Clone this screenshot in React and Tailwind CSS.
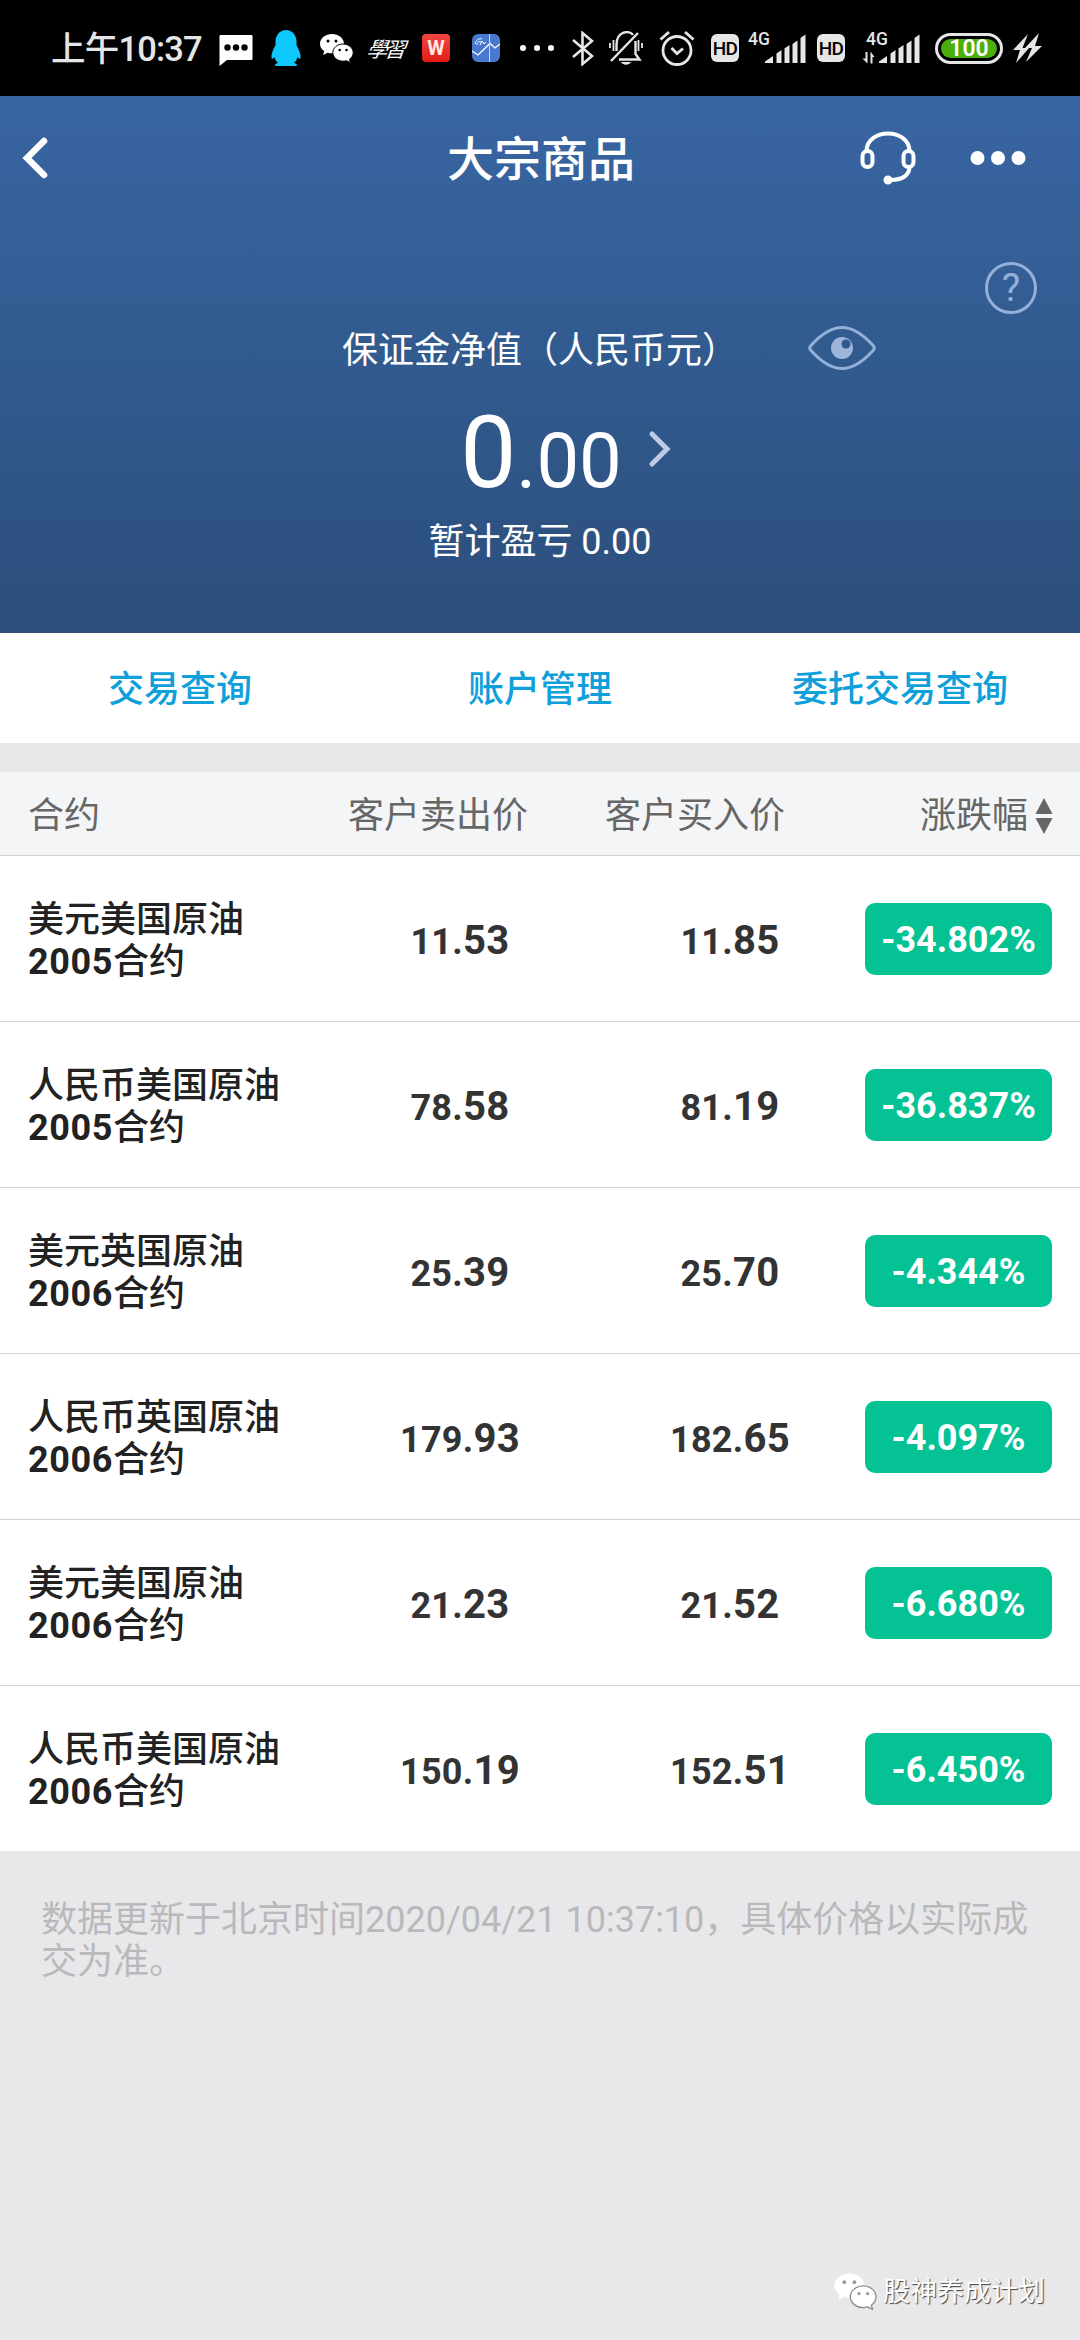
const contracts = [
  { name: "美元美国原油", year: "2005", sell: "11.53", buy: "11.85", change: "-34.802%" },
  { name: "人民币美国原油", year: "2005", sell: "78.58", buy: "81.19", change: "-36.837%" },
  { name: "美元英国原油", year: "2006", sell: "25.39", buy: "25.70", change: "-4.344%" },
  { name: "人民币英国原油", year: "2006", sell: "179.93", buy: "182.65", change: "-4.097%" },
  { name: "美元美国原油", year: "2006", sell: "21.23", buy: "21.52", change: "-6.680%" },
  { name: "人民币美国原油", year: "2006", sell: "150.19", buy: "152.51", change: "-6.450%" },
];

const tabs = ["交易查询", "账户管理", "委托交易查询"];

const WechatIcon = ({ className, eye = "#000", stroke = "#000" }) => (
  <svg viewBox="0 0 35 30" className={className}>
    <path
      d="M13 1C6.400 1 1 5.300 1 10.700c0 3 1.700 5.700 4.300 7.500L4 22l4.600-2.300c1.400.4 2.900.6 4.400.6 6.600 0 12-4.300 12-9.600S19.600 1 13 1z"
      fill="#fff"
    />
    <path
      d="M24 11c-5.600 0-10.200 3.800-10.200 8.600S18.400 28.200 24 28.200c1.300 0 2.500-.2 3.600-.5l3.900 2-1-3.400c2.300-1.600 3.700-4 3.700-6.700C34.200 14.800 29.600 11 24 11z"
      fill="#fff"
      stroke={stroke}
      strokeWidth="1"
    />
    <g fill={eye}>
      <circle cx="9" cy="8" r="1.500" />
      <circle cx="17" cy="8" r="1.500" />
      <circle cx="20.700" cy="17" r="1.300" />
      <circle cx="27.500" cy="17" r="1.300" />
    </g>
  </svg>
);

const Signal = ({ arrows }) => (
  <svg viewBox="0 0 58 32" className="h-8 w-[58px] overflow-visible" fill="#e6e6e6">
    <text x={arrows ? 4 : 0} y="12.500" fontSize="17.500" fontWeight="500" fontFamily="Roboto, sans-serif">
      4G
    </text>
    {arrows ? <path d="M3.500 20h2v11.500L.5 26.500h3zM8.500 31.500V19.500l4 5.500h-2v6.500z" /> : null}
    <path d="M17 31v-1.500l8-5.500V31zM28.500 21.500l5-3.500v13h-5zM36.500 16.500l5-3.500v18h-5zM44.500 12l5-3.500V31h-5zM52.500 6l5-3.500V31h-5z" />
  </svg>
);

const HdBadge = () => (
  <div className="flex h-7 w-7 items-center justify-center rounded-[6px] bg-[#e6e6e6] text-[19px] font-medium leading-none tracking-[-0.8px] text-black">
    HD
  </div>
);

const StatusBar = () => (
  <div className="flex h-24 items-center bg-black pl-[51px] text-[#e6e6e6]">
    <div className="w-[168px] whitespace-nowrap pt-[2px] text-[34.5px] font-medium leading-none tracking-[-0.8px]">上午10:37</div>
    <svg viewBox="0 0 34 32" className="mt-1 h-8 w-[34px]">
      <path d="M1.500 1h31q1 0 1 1v23q0 1-1 1H8l-7.500 6V2q0-1 1-1z" fill="#fff" />
      <circle cx="8.500" cy="13.500" r="3.200" />
      <circle cx="17" cy="13.500" r="3.200" />
      <circle cx="25.500" cy="13.500" r="3.200" />
    </svg>
    <svg viewBox="0 0 30 37" className="ml-[18px] h-[37px] w-[30px]" fill="#0fc8fb">
      <path d="M15 0C8.500 0 5 5 4.500 11v4C2 20 0 24 .5 28c.3 1.500 2 .5 3-1 .6 2.500 1.700 4.700 3.500 6-3 .5-4 3-2 3h20c2 0 1-2.500-2-3 1.800-1.300 2.900-3.500 3.500-6 1 1.500 2.700 2.500 3 1 .5-4-1.500-8-4-13v-4C25 5 21.500 0 15 0z" />
    </svg>
    <WechatIcon className="ml-[18px] h-[30px] w-[35px]" />
    <div className="ml-[13px] w-[38px] -skew-x-6 whitespace-nowrap font-['Noto_Sans_CJK_TC',sans-serif] text-[21px] italic leading-none tracking-[-3px] text-white">
      學習
    </div>
    <div className="ml-[17px] flex h-7 w-7 items-center justify-center rounded-[4px] bg-gradient-to-b from-[#f0453d] to-[#e11914] text-[20px] font-bold leading-none text-[#fde8e4]">
      W
    </div>
    <svg viewBox="0 0 28 28" className="ml-[22px] h-7 w-7">
      <rect width="28" height="28" rx="6" fill="#4878cf" />
      <path d="M0 17l6 4L18 9.500l5 4.500 5-4" fill="none" stroke="#fff" strokeWidth="1.300" />
      <path d="M17.500 0v28" stroke="#c9d8f2" strokeWidth="1" />
      <path d="M3 10c1-4 4-6 7-5M5 11c0-3 2-4 4-3M8 11l2-4 2 3 2-2" fill="none" stroke="#fff" strokeWidth="1" />
    </svg>
    <div className="ml-5 flex w-[34px] justify-between">
      <i className="h-[6px] w-[6px] rounded-full bg-white" />
      <i className="h-[6px] w-[6px] rounded-full bg-white" />
      <i className="h-[6px] w-[6px] rounded-full bg-white" />
    </div>
    <svg viewBox="0 0 22 35" className="ml-[18px] h-[35px] w-[22px]" fill="none" stroke="#e6e6e6" strokeWidth="2.600">
      <path d="M1 9l19 16-9.500 8V2L20 10 1 26" />
    </svg>
    <svg viewBox="0 0 34 34" className="ml-[15px] h-[34px] w-[34px]" fill="none" stroke="#e6e6e6" strokeWidth="2.400">
      <path d="M7.500 20v-6C7.500-.5 21-1 24 4M10 28.500h20.500L26.500 23V10M2 30L29 2" />
      <path d="M4.500 9v11M1 12v5M29.500 9v11M33 12v5" strokeWidth="1.800" />
      <path d="M12 31h10c-2 3.500-8 3.500-10 0z" fill="#e6e6e6" stroke="none" />
    </svg>
    <svg viewBox="0 0 36 36" className="ml-4 h-9 w-9" fill="none" stroke="#e6e6e6" strokeWidth="2.800">
      <circle cx="18" cy="20.500" r="14" />
      <path d="M12.500 18l5.500 5.500 6-5M1.500 9.500L10 2M34.500 9.500L26 2" />
    </svg>
    <div className="ml-4">
      <HdBadge />
    </div>
    <div className="ml-[9px]">
      <Signal />
    </div>
    <div className="ml-[11px]">
      <HdBadge />
    </div>
    <div className="ml-[17px]">
      <Signal arrows />
    </div>
    <div className="ml-[15px] flex h-[31px] w-[68px] rounded-full border-[3px] border-[#e6e6e6] p-[3px]">
      <div className="flex flex-1 items-center justify-center rounded-full bg-[#4bae0c] text-[23px] font-semibold leading-none text-white">
        100
      </div>
    </div>
    <svg viewBox="0 0 30 30" className="ml-[10px] h-[30px] w-[30px]" fill="#e6e6e6">
      <path d="M15 1L0 17h7L3 30 16 15H9.500zM26 0L12 15h7l-6 14 16-16h-7z" />
    </svg>
  </div>
);

const AccountPanel = () => (
  <section className="relative h-[537px] bg-gradient-to-b from-[#3866a3] via-[#315a8e] to-[#2c4f7c] text-white">
    <nav className="flex h-[124px] items-center">
      <svg viewBox="0 0 26 42" className="ml-[22px] h-[42px] w-[26px]" fill="none" stroke="#fff" strokeWidth="6.500">
        <path d="M22 4L5 21l17 17" strokeLinecap="round" />
      </svg>
      <h1 className="ml-[399px] w-[188px] whitespace-nowrap pt-[2px] text-[47px] font-medium leading-none">大宗商品</h1>
      <svg viewBox="0 0 56 56" className="ml-[225px] h-14 w-14" fill="none" stroke="#fff" strokeWidth="4">
        <rect x="2.500" y="21" width="10" height="16" rx="5" />
        <rect x="43.500" y="21" width="10" height="16" rx="5" />
        <path d="M6.500 21C7-2.500 49-2.500 49.500 21M49.500 37c0 8-7 13-19 13" />
        <circle cx="28" cy="50" r="4.500" fill="#fff" stroke="none" />
      </svg>
      <svg viewBox="0 0 56 16" className="ml-[54px] h-4 w-14" fill="#fff">
        <circle cx="7.500" cy="8" r="7" />
        <circle cx="28" cy="8" r="7" />
        <circle cx="48.500" cy="8" r="7" />
      </svg>
    </nav>
    <div className="absolute right-[43px] top-[166px] flex h-[52px] w-[52px] items-center justify-center rounded-full border-[3px] border-[#93b0d9] text-[39px] leading-none text-[#93b0d9]">
      ?
    </div>
    <svg viewBox="0 0 68 44" className="absolute left-[808px] top-[230px] h-11 w-[68px]" fill="none" stroke="#93b0d9" strokeWidth="3">
      <path d="M2.500 20Q19 1.500 34 1.500T65.500 20Q67 22 65.500 24Q49 42.500 34 42.500T2.500 24Q1 22 2.500 20z" />
      <circle cx="34" cy="22" r="11" fill="#9db5da" stroke="none" />
      <circle cx="38" cy="18" r="4.500" fill="#32598e" stroke="none" />
    </svg>
    <div className="flex flex-col items-center">
      <p className="mt-[110px] text-[36px] leading-[42px]">保证金净值（人民币元）</p>
      <div className="relative mt-[26px] flex h-[110px] items-baseline pl-[2px] text-[76px] leading-[110px]">
        <span className="text-[100px]">0</span>
        <span>.00</span>
        <svg
          viewBox="0 0 24 38"
          className="absolute left-[190px] top-[32px] h-[38px] w-6"
          fill="none"
          stroke="#bccbe6"
          strokeWidth="5"
          strokeLinecap="round"
        >
          <path d="M4 4l15 15L4 34" />
        </svg>
      </div>
      <p className="mt-[13px] text-[36px] leading-[42px]">暂计盈亏 0.00</p>
    </div>
  </section>
);

const Price = ({ value }) => {
  const [whole, cents] = value.split(".");
  return (
    <div className="w-[270px] pt-[6px] text-center text-[36px] font-bold leading-[48px] tracking-[0.3px] text-[#333]">
      {whole}.<span className="text-[40px]">{cents}</span>
    </div>
  );
};

const App = () => (
  <main className="relative h-[2340px] w-[1080px] overflow-hidden bg-[#e8e8ea] font-[Roboto,'Noto_Sans_CJK_SC',sans-serif]">
    <StatusBar />
    <AccountPanel />

    <div className="grid h-[110px] grid-cols-3 items-center bg-white pt-[3px] text-center text-[36px] font-medium text-[#0f9fda]">
      {tabs.map((tab) => (
        <span key={tab}>{tab}</span>
      ))}
    </div>

    <div className="mt-[29px] flex h-[84px] items-center whitespace-nowrap border-b border-[#d4d4d6] bg-[#f4f5f7] pl-7 pt-1 text-[36px] text-[#666]">
      <span className="w-[320px]">合约</span>
      <span className="w-[257px]">客户卖出价</span>
      <span className="w-[315px]">客户买入价</span>
      <span>涨跌幅</span>
      <svg viewBox="0 0 18 36" className="ml-[7px] h-9 w-[18px]" fill="#666">
        <path d="M9 0l8.500 16H.5zM9 36l8.500-16H.5z" />
      </svg>
    </div>

    <div className="bg-white">
      {contracts.map((item) => (
        <div
          key={item.name + item.year}
          className="flex h-[166px] items-center border-b border-[#d4d4d6] pl-7 last:h-[165px] last:border-b-0"
        >
          <div className="w-[297px] pt-1 text-[36px] font-medium leading-[42px] text-[#222]">
            <p>{item.name}</p>
            <p>
              <span className="font-bold tracking-[0.6px]">{item.year}</span>合约
            </p>
          </div>
          <Price value={item.sell} />
          <Price value={item.buy} />
          <div className="flex h-[72px] w-[187px] items-center justify-center rounded-[10px] bg-[#04c294] pt-[3px] text-[36px] font-bold text-white">
            {item.change}
          </div>
        </div>
      ))}
    </div>

    <p className="mt-[48px] pl-[41px] pr-[40px] text-[36px] leading-[42px] text-[#b9b9bb]">
      数据更新于北京时间2020/04/21 10:37:10，具体价格以实际成交为准。
    </p>

    <div className="absolute bottom-[30px] right-[35px] flex items-center">
      <WechatIcon className="h-[38px] w-[44px]" eye="#999" stroke="#888" />
      <span className="ml-[6px] pt-[2px] text-[27px] leading-none text-white [text-shadow:1px_1px_1px_#444]">股神养成计划</span>
    </div>
  </main>
);

export default App;
